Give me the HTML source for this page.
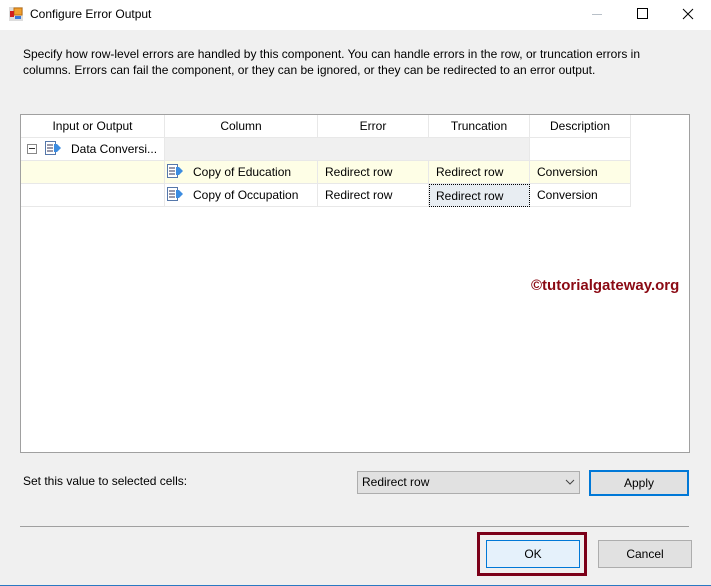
<!DOCTYPE html>
<html><head><style>
*{margin:0;padding:0;box-sizing:border-box}
body{width:711px;height:586px;background:#f0f0f0;font-family:"Liberation Sans",sans-serif;font-size:12px;color:#000;position:relative;overflow:hidden}
.a{position:absolute}
.title{left:0;top:0;width:711px;height:30px;background:#fff}
.grid{left:20px;top:114px;width:670px;height:339px;background:#fff;border:1px solid #a0a0a0}
.c{position:absolute;height:23px;line-height:22px;border-right:1px solid #e8e8e8;border-bottom:1px solid #e8e8e8;white-space:nowrap;overflow:hidden}
.h{text-align:center}
.btn{position:absolute;background:#e1e1e1;border:1px solid #adadad;text-align:center}
</style></head><body>
<div class="a title"></div>
<svg class="a" style="left:9px;top:7px" width="14" height="14"><rect x="0" y="0" width="14" height="14" fill="#ddd"/><rect x="5" y="1" width="8" height="7" fill="#f0a030" stroke="#c07010"/><rect x="1" y="4" width="4" height="6" fill="#d02020"/><rect x="6" y="9" width="6" height="3" fill="#3a78d8"/></svg>
<div class="a" style="left:30px;top:7px;font-size:12px">Configure Error Output</div>
<div class="a" style="left:592px;top:14px;width:10px;height:1px;background:#b8c0c8"></div>
<div class="a" style="left:637px;top:8px;width:11px;height:11px;border:1px solid #000"></div>
<svg class="a" style="left:682px;top:8px" width="12" height="12"><path d="M1 1L11 11M11 1L1 11" stroke="#000" stroke-width="1"/></svg>
<div class="a" style="left:23px;top:46px;line-height:16px">Specify how row-level errors are handled by this component. You can handle errors in the row, or truncation errors in<br>columns. Errors can fail the component, or they can be ignored, or they can be redirected to an error output.</div>
<div class="a grid">
<div class="c h" style="left:0;top:0;width:144px">Input or Output</div>
<div class="c h" style="left:144px;top:0;width:153px">Column</div>
<div class="c h" style="left:297px;top:0;width:111px">Error</div>
<div class="c h" style="left:408px;top:0;width:101px">Truncation</div>
<div class="c h" style="left:509px;top:0;width:101px">Description</div>
<div class="c" style="left:0;top:23px;width:144px;padding-left:50px">Data Conversi...</div>
<div class="c" style="left:144px;top:23px;width:365px;background:#f0f0f0"></div>
<div class="c" style="left:509px;top:23px;width:101px"></div>
<div class="c" style="left:0;top:46px;width:144px;background:#fefee6"></div>
<div class="c" style="left:144px;top:46px;width:153px;background:#fefee6;padding-left:28px">Copy of Education</div>
<div class="c" style="left:297px;top:46px;width:111px;background:#fefee6;padding-left:7px">Redirect row</div>
<div class="c" style="left:408px;top:46px;width:101px;background:#fefee6;padding-left:7px">Redirect row</div>
<div class="c" style="left:509px;top:46px;width:101px;background:#fefee6;padding-left:7px">Conversion</div>
<div class="c" style="left:0;top:69px;width:144px"></div>
<div class="c" style="left:144px;top:69px;width:153px;padding-left:28px">Copy of Occupation</div>
<div class="c" style="left:297px;top:69px;width:111px;padding-left:7px">Redirect row</div>
<div class="c" style="left:408px;top:69px;width:101px;padding-left:6px;background:#e8edf2;border:1px dotted #000">Redirect row</div>
<div class="c" style="left:509px;top:69px;width:101px;padding-left:7px">Conversion</div>
<div class="a" style="left:6px;top:29px;width:10px;height:10px;border:1px solid #888;background:#fff"></div>
<div class="a" style="left:8px;top:33px;width:6px;height:1px;background:#333"></div>
</div>
<svg class="a" style="left:45px;top:141px" width="17" height="14"><rect x="0.5" y="0.5" width="10" height="13" fill="#fff" stroke="#5577aa"/><path d="M2 4h6M2 7h6M2 10h6" stroke="#335"/><path d="M9 3h3l4 4-4 4H9z" fill="#3c8ce0"/></svg>
<svg class="a" style="left:167px;top:164px" width="17" height="14"><rect x="0.5" y="0.5" width="10" height="13" fill="#fff" stroke="#5577aa"/><path d="M2 4h6M2 7h6M2 10h6" stroke="#335"/><path d="M9 3h3l4 4-4 4H9z" fill="#3c8ce0"/></svg>
<svg class="a" style="left:167px;top:187px" width="17" height="14"><rect x="0.5" y="0.5" width="10" height="13" fill="#fff" stroke="#5577aa"/><path d="M2 4h6M2 7h6M2 10h6" stroke="#335"/><path d="M9 3h3l4 4-4 4H9z" fill="#3c8ce0"/></svg>
<div class="a" style="left:531px;top:277px;color:#8b0a14;font-weight:bold;font-size:15px">©tutorialgateway.org</div>
<div class="a" style="left:23px;top:474px">Set this value to selected cells:</div>
<div class="a" style="left:357px;top:471px;width:223px;height:23px;background:#e1e1e1;border:1px solid #adadad;line-height:21px;padding-left:4px">Redirect row</div>
<svg class="a" style="left:565px;top:479px" width="10" height="6"><path d="M1 1l4 4 4-4" stroke="#444" fill="none"/></svg>
<div class="btn" style="left:589px;top:470px;width:100px;height:26px;border:2px solid #0078d7;line-height:22px">Apply</div>
<div class="a" style="left:20px;top:526px;width:669px;height:1px;background:#a0a0a0"></div>
<div class="a" style="left:477px;top:532px;width:110px;height:44px;border:3px solid #7b0019"></div>
<div class="btn" style="left:486px;top:540px;width:94px;height:28px;background:#e5f1fb;border-color:#0078d7;line-height:26px">OK</div>
<div class="btn" style="left:598px;top:540px;width:94px;height:28px;line-height:26px">Cancel</div>
<div class="a" style="left:0;top:585px;width:711px;height:1px;background:#2b79c2"></div>
</body></html>
